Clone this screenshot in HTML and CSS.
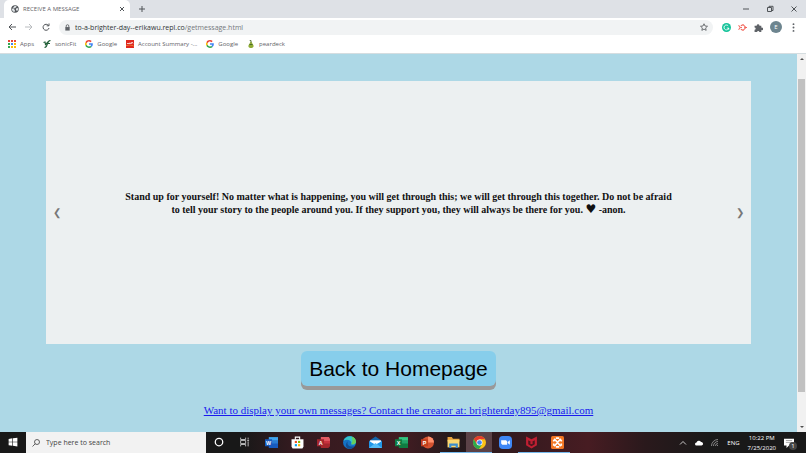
FILE: index.html
```html
<!DOCTYPE html>
<html lang="en">
<head>
<meta charset="UTF-8">
<meta name="viewport" content="width=device-width, initial-scale=1.0">
<title>RECEIVE A MESSAGE</title>
<link rel="stylesheet" href="styles.css">
</head>
<body>
<svg class="defs" aria-hidden="true">
    <symbol id="google" viewBox="0 0 48 48">
        <path fill="#ea4335" d="M24 9.5c3.5 0 6.700 1.200 9.200 3.600l6.900-6.900C35.900 2.400 30.500 0 24 0 14.600 0 6.500 5.400 2.600 13.200l8 6.200C12.400 13.700 17.700 9.500 24 9.500z"/>
        <path fill="#4285f4" d="M47 24.500c0-1.600-.2-3.100-.4-4.500H24v9h12.900c-.6 3-2.200 5.500-4.700 7.200l7.700 6C44.400 38 47 31.800 47 24.500z"/>
        <path fill="#fbbc05" d="M10.500 28.600a14.500 14.500 0 0 1 0-9.200l-8-6.200a24 24 0 0 0 0 21.600z"/>
        <path fill="#34a853" d="M24 48c6.500 0 11.900-2.100 15.900-5.800l-7.700-6c-2.200 1.500-4.900 2.300-8.200 2.300-6.300 0-11.600-4.200-13.500-9.900l-8 6.200C6.500 42.600 14.600 48 24 48z"/>
    </symbol>
</svg>

<header class="browser">
    <div class="tabs">
        <div class="tab">
            <svg class="favicon" viewBox="0 0 16 16"><circle cx="8" cy="8" r="7.500" fill="#53575b"/><path fill="#dfe3e6" d="M2 7l4 1 2 3-1 3-3-1-2-3zM7 2l4 0-1 3-3 1-1 2-2-2zM10 7l4-1 0 4-2 2-2-2z"/></svg>
            <span class="tab-title">RECEIVE A MESSAGE</span>
            <button class="icon-btn" aria-label="Close tab"><svg viewBox="0 0 8 8"><path d="M2 2l4 4M6 2l-4 4"/></svg></button>
        </div>
        <button class="icon-btn new-tab" aria-label="New tab"><svg viewBox="0 0 8 8"><path d="M4 1v6M1 4h6"/></svg></button>
        <div class="window-btns">
            <button class="icon-btn" aria-label="Minimize"><svg viewBox="0 0 8 8"><path d="M1 4h6"/></svg></button>
            <button class="icon-btn" aria-label="Restore"><svg viewBox="0 0 8 8"><path d="M1.500 2.500h4v4h-4zM3 2.500v-1.200h4v4.200h-1.500"/></svg></button>
            <button class="icon-btn" aria-label="Close"><svg viewBox="0 0 8 8"><path d="M1.500 1.500l5 5M6.500 1.500l-5 5"/></svg></button>
        </div>
    </div>
    <div class="toolbar">
        <button class="icon-btn" aria-label="Back"><svg viewBox="0 0 8 8"><path d="M8 4H1M4 1L1 4l3 3"/></svg></button>
        <button class="icon-btn forward" aria-label="Forward"><svg viewBox="0 0 8 8"><path d="M0 4h7M4 1l3 3-3 3"/></svg></button>
        <button class="icon-btn" aria-label="Reload"><svg viewBox="0 0 8 8"><path d="M6.500 2.500A3 3 0 1 0 7 5M7 .5v2.300H4.700"/></svg></button>
        <div class="address">
            <svg class="lock" viewBox="0 0 8 8"><path fill="#5f6368" d="M1.500 3.500h5v4h-5z"/><path fill="none" stroke="#5f6368" d="M2.500 4V2.300a1.500 1.500 0 0 1 3 0V4"/></svg>
            <span class="url">to-a-brighter-day--erikawu.repl.co<span class="path">/getmessage.html</span></span>
            <button class="icon-btn" aria-label="Bookmark this page"><svg viewBox="0 0 16 16"><path stroke-width="1.600" d="M8 1.500l2 4.500 5 .5-3.700 3.300 1 4.900L8 12.200l-4.300 2.500 1-4.900L1 6.500 6 6z"/></svg></button>
        </div>
        <div class="extensions">
            <svg viewBox="0 0 16 16"><circle cx="8" cy="8" r="8" fill="#15c39a"/><path fill="none" stroke="#fff" stroke-width="1.600" d="M11 5a4.300 4.300 0 1 0 1 4H8.500M12 9v3"/></svg>
            <svg viewBox="0 0 16 16"><path fill="none" stroke="#f2665c" stroke-width="1.800" d="M1 4l3 4-3 4M5 5l4-2 5 5-5 5-4-2M5 8h2M11 8h5"/></svg>
            <svg viewBox="0 0 16 16"><path fill="#5f6368" d="M1 5h4a2.300 2.300 0 1 1 4.500 0H13v3.500a2.300 2.300 0 1 1 0 4V16H9.500a2 2 0 1 0-4 0H1v-4a2 2 0 1 0 0-4z"/></svg>
            <span class="avatar">E</span>
            <svg viewBox="0 0 16 16"><g fill="#5f6368"><circle cx="8" cy="2" r="1.700"/><circle cx="8" cy="8" r="1.700"/><circle cx="8" cy="14" r="1.700"/></g></svg>
        </div>
    </div>
    <nav class="bookmarks">
        <a href="#"><svg viewBox="0 0 8 8"><g fill="#ea4335"><path d="M0 0h2v2H0zM3 0h2v2H3zM6 0h2v2H6z"/></g><path fill="#34a853" d="M0 3h2v2H0zM0 6h2v2H0z"/><path fill="#4285f4" d="M3 3h2v2H3z"/><path fill="#fbbc05" d="M6 3h2v2H6zM3 6h2v2H3zM6 6h2v2H6z"/></svg>Apps</a>
        <a href="#"><svg viewBox="0 0 16 16"><path fill="none" stroke="#24613a" stroke-width="2.400" d="M1 5l3-1 1 5 5-5M3 15c4 0 5-4 6-8s2-6 6-6M7 7h7"/></svg>sonicFit</a>
        <a href="#"><svg viewBox="0 0 8 8"><use href="#google"/></svg>Google</a>
        <a href="#"><svg viewBox="0 0 16 16"><path fill="#e0281e" d="M0 0h16v16H0z"/><path fill="none" stroke="#fff" stroke-width="1.500" d="M2 8l2-2 2 2 2-2M8 5l2 3 2-4 2 3"/><path fill="#f6b044" d="M0 11q8-3 16 1v1q-8-4-16-1z"/></svg>Account Summary -...</a>
        <a href="#"><svg viewBox="0 0 8 8"><use href="#google"/></svg>Google</a>
        <a href="#"><svg viewBox="0 0 16 16"><path fill="#8fac35" d="M8 4c3 0 2 3 4 5 3 4 0 7-4 7s-7-3-4-7c2-2 1-5 4-5z"/><path fill="none" stroke="#4c6b2b" stroke-width="2" d="M8 5V1l-3-1M5 9h6"/></svg>peardeck</a>
    </nav>
</header>

<div class="viewport">
    <main class="page">
        <section class="slideshow">
            <button class="arrow" aria-label="Previous message">&#10094;</button>
            <p class="message">Stand up for yourself! No matter what is happening, you will get through this; we will get through this together. Do not be afraid to tell your story to the people around you. If they support you, they will always be there for you. <span class="heart">&#9829;&#65038;</span> -anon.</p>
            <button class="arrow" aria-label="Next message">&#10095;</button>
        </section>
        <button class="home-btn">Back to Homepage</button>
        <a class="contact" href="mailto:brighterday895@gmail.com">Want to display your own messages? Contact the creator at: brighterday895@gmail.com</a>
    </main>
    <div class="scrollbar">
        <svg viewBox="0 0 8 8"><path d="M2 5l2-2 2 2z"/></svg>
        <div class="track"><div class="thumb"></div></div>
        <svg viewBox="0 0 8 8"><path d="M2 3l2 2 2-2z"/></svg>
    </div>
</div>

<footer class="taskbar">
    <button class="task" aria-label="Start"><svg viewBox="0 0 16 16"><path fill="#fff" d="M1 3l6-1v5.500H1zM8 2l7-1v6.500H8zM1 8.500h6V14l-6-1zM8 8.500h7V15l-7-1z"/></svg></button>
    <label class="search">
        <svg viewBox="0 0 16 16"><circle cx="10" cy="6" r="5"/><path d="M6.500 9.500L1 15"/></svg>
        <input type="text" placeholder="Type here to search" aria-label="Type here to search">
    </label>
    <button class="task" aria-label="Cortana"><svg viewBox="0 0 16 16"><circle cx="8" cy="8" r="6" fill="none" stroke="#fff" stroke-width="2"/></svg></button>
    <button class="task" aria-label="Task view"><svg viewBox="0 0 16 16"><path fill="none" stroke="#ccc" stroke-width="1.400" d="M1 1v3h8V1M1 15v-3h8v3M1 5.500h8v5H1zM13 1v3M13 7v8M11.500 5.500h3"/></svg></button>
    <button class="task" aria-label="Word"><svg class="app" viewBox="0 0 24 24"><path fill="#41a5ee" d="M7 2h17v7H7z"/><path fill="#2b7cd3" d="M7 8h17v7H7z"/><path fill="#185abd" d="M7 14h17v8H7zM0 6h13v13H0z"/><text x="2" y="16">W</text></svg></button>
    <button class="task" aria-label="Store"><svg class="app" viewBox="0 0 24 24"><path fill="none" stroke="#fff" stroke-width="2" d="M8 7V2h8v5"/><path fill="#fff" d="M1 6h22v14l-2 3H3l-2-3z"/><path fill="#f25022" d="M7 9h4v4H7z"/><path fill="#7fba00" d="M13 9h4v4h-4z"/><path fill="#00a4ef" d="M7 15h4v4H7z"/><path fill="#ffb900" d="M13 15h4v4h-4z"/></svg></button>
    <button class="task" aria-label="Access"><svg class="app" viewBox="0 0 24 24"><path fill="#e35b62" d="M7 2h15l2 3v5H7z"/><path fill="#c8323e" d="M7 9h17v6H7z"/><path fill="#a4262c" d="M7 14h17v5l-3 3H7zM0 6h13v13H0z"/><text x="3" y="16">A</text></svg></button>
    <button class="task" aria-label="Edge"><svg class="app" viewBox="0 0 24 24"><circle cx="12" cy="12" r="12" fill="#1572c6"/><path fill="#36c5c9" d="M1 9C5-3 22-2 24 10c0 5-4 7-9 5 3-5-6-11-14-6z"/><path fill="#67cf5b" d="M16 1c6 2 8 6 8 10-1 4-5 5-9 4 4-5 2-10 1-14z"/><path fill="#124f93" d="M9 10c-3 6 3 11 12 9-3 4-7 5-11 4-6-2-6-10-1-13z"/></svg></button>
    <button class="task" aria-label="Mail"><svg class="app" viewBox="0 0 24 24"><path fill="#1565a9" d="M0 9l12-8 12 8v3H0z"/><path fill="#fff" d="M2 8h20v8H2z"/><path fill="#2196e8" d="M0 9l12 7 12-7v13H0z"/><path fill="#55baf4" d="M0 22l12-9 12 9z"/></svg></button>
    <button class="task" aria-label="Excel"><svg class="app" viewBox="0 0 24 24"><path fill="#33c481" d="M7 2h17v7H7z"/><path fill="#21a366" d="M7 8h17v7H7z"/><path fill="#107c41" d="M7 14h17v8H7zM0 6h13v13H0z"/><text x="3" y="16">X</text></svg></button>
    <button class="task" aria-label="PowerPoint"><svg class="app" viewBox="0 0 24 24"><circle cx="13" cy="12" r="11" fill="#d35230"/><path fill="#ff8f6b" d="M13 1a11 11 0 0 1 11 11H13z"/><path fill="#c43e1c" d="M0 6h13v13H0z"/><text x="3" y="16">P</text></svg></button>
    <button class="task open" aria-label="File Explorer"><svg class="app" viewBox="0 0 24 24"><path fill="#e8a33d" d="M1 2h8l2 3h12v5H1z"/><path fill="#fbd971" d="M1 7h22v14H1z"/><path fill="#3c8dcc" d="M4 22v-8h16v8h-4v-4H8v4z"/></svg></button>
    <button class="task open active" aria-label="Chrome"><svg class="app" viewBox="0 0 24 24"><circle cx="12" cy="12" r="12" fill="#fbc116"/><path fill="#e33b2e" d="M1.600 6A12 12 0 0 1 22.400 6H12l-5 9z"/><path fill="#2da94f" d="M1.600 6A12 12 0 0 0 11 24l6-9-5 2-5-2z"/><circle cx="12" cy="12" r="5.500" fill="#fff"/><circle cx="12" cy="12" r="4.300" fill="#4285f4"/></svg></button>
    <button class="task" aria-label="Zoom"><svg class="app" viewBox="0 0 24 24"><rect width="24" height="24" rx="7" fill="#3f87f5"/><path fill="#fff" d="M4 8h9l2 2v6H6l-2-2zM16 11l4-3v8l-4-3z"/></svg></button>
    <button class="task open" aria-label="McAfee"><svg class="app" viewBox="0 0 24 24"><path fill="#c01f32" d="M2 1l10 5 10-5v16l-10 6-10-6z"/><path fill="#4a171d" d="M6 8l6 3 6-3v7l-6 4-6-4z"/><path fill="#c01f32" d="M10 10h4v5h-4z"/></svg></button>
    <button class="task open" aria-label="XAMPP"><svg class="app" viewBox="0 0 24 24"><rect width="24" height="24" rx="3" fill="#f37623"/><path fill="none" stroke="#fff" stroke-width="3" d="M6 5l12 14M18 5L6 19M5 7v3M19 7v3M5 14v4M19 14v4M9 4h6M9 20h6"/></svg></button>
    <div class="tray">
        <svg viewBox="0 0 16 16"><path fill="none" stroke="#fff" stroke-width="1.500" d="M2 11l6-6 6 6"/></svg>
        <svg viewBox="0 0 16 16"><path fill="#fff" d="M3 13a3 3 0 0 1 0-6 5 5 0 0 1 9-1 3.500 3.500 0 0 1 1 7z"/></svg>
        <svg viewBox="0 0 16 16"><path fill="none" stroke="#aaa" stroke-width="1.500" d="M1 14A13 13 0 0 1 14 1M5 14a9 9 0 0 1 9-9M9 14a5 5 0 0 1 5-5M12 14l2-2"/></svg>
        <span>ENG</span>
        <div class="clock"><span>10:22 PM</span><span>7/25/2020</span></div>
        <div class="notify">
            <svg viewBox="0 0 16 16"><path fill="#fff" d="M0 1h16v11H8l-4 4v-4H0z"/><path stroke="#777" d="M3 4h10M3 7h10"/></svg>
            <span class="badge">1</span>
        </div>
    </div>
</footer>
</body>
</html>
```

FILE: styles.css
```css
* {
    box-sizing: border-box;
}
body {
    margin: 0;
    height: 100vh;
    display: flex;
    flex-direction: column;
    overflow: hidden;
    font-family: "Open Sans", "Noto Sans", sans-serif;
    font-size: 6px;
    color: #5f6368;
}
button {
    border: none;
    background: none;
    padding: 0;
    font-family: inherit;
    cursor: pointer;
}
svg {
    display: block;
    flex: none;
    width: 8px;
    height: 8px;
}
.defs {
    position: absolute;
    width: 0;
    height: 0;
}
.icon-btn svg {
    fill: none;
    stroke: #505458;
}

/* browser */
.browser {
    background-color: #fff;
    border-bottom: 1px solid #d5dde0;
}
.tabs {
    display: flex;
    align-items: center;
    height: 18px;
    padding-left: 4px;
    background-color: #dee1e6;
}
.tab {
    display: flex;
    align-items: center;
    gap: 4px;
    width: 126px;
    height: 18px;
    padding: 0 4px 0 7px;
    border-radius: 5px 5px 0 0;
    background-color: #fff;
}
.tab-title {
    flex: 1;
    white-space: nowrap;
}
.new-tab {
    margin-left: 8px;
}
.window-btns {
    display: flex;
    gap: 16px;
    margin-left: auto;
    padding-right: 8px;
}
.toolbar {
    display: flex;
    align-items: center;
    gap: 9px;
    height: 18px;
    padding: 0 8px;
}
.forward svg {
    stroke: #b9bcbf;
}
.address {
    flex: 1;
    display: flex;
    align-items: center;
    gap: 4px;
    height: 15px;
    padding: 0 5px;
    border-radius: 8px;
    background-color: #f1f3f4;
}
.lock {
    width: 7px;
    height: 7px;
}
.url {
    flex: 1;
    font-size: 7px;
    color: #303336;
}
.path {
    color: #74787c;
}
.extensions {
    display: flex;
    align-items: center;
    gap: 7px;
}
.extensions svg {
    width: 9px;
    height: 9px;
}
.avatar {
    width: 12px;
    height: 12px;
    border-radius: 50%;
    background-color: #6d858f;
    color: #fff;
    line-height: 12px;
    text-align: center;
}
.bookmarks {
    display: flex;
    align-items: center;
    gap: 9px;
    height: 17px;
    padding: 0 8px 2px;
}
.bookmarks a {
    display: flex;
    align-items: center;
    gap: 4px;
    color: #5f6368;
    text-decoration: none;
}

/* page */
.viewport {
    flex: 1;
    display: flex;
    min-height: 0;
}
.page {
    flex: 1;
    display: flex;
    flex-direction: column;
    align-items: center;
    padding: 27px 46px 0;
    background-color: #add8e6;
    font-family: "Liberation Serif", "Times New Roman", "DejaVu Sans", serif;
}
.slideshow {
    display: flex;
    align-items: center;
    width: 100%;
    height: 75%;
    padding: 0 7px;
    background-color: #ecf0f1;
}
.arrow {
    width: 8px;
    font-family: "DejaVu Sans", sans-serif;
    font-size: 10px;
    color: #777;
}
.message {
    flex: 1;
    margin: 0;
    padding: 0 64px 20px;
    font-size: 10px;
    font-weight: bold;
    line-height: 13px;
    text-align: center;
    color: #111;
}
.heart {
    font-family: "DejaVu Sans", sans-serif;
    font-size: 12px;
    line-height: 10px;
}
.home-btn {
    margin-top: 7px;
    padding: 0 8px;
    border-radius: 6px;
    background-color: #87ceeb;
    box-shadow: 0 4px #999;
    font-family: "Liberation Sans", Arial, sans-serif;
    font-size: 21px;
    line-height: 35px;
    color: #000;
}
.contact {
    margin-top: 18px;
    font-size: 11px;
    line-height: 13px;
    color: #1a1aee;
}
.scrollbar {
    display: flex;
    flex-direction: column;
    align-items: center;
    width: 9px;
    padding: 1px 0;
    background-color: #f1f1f1;
}
.scrollbar svg {
    fill: #505050;
}
.track {
    flex: 1;
    width: 7px;
    padding-top: 16px;
}
.thumb {
    height: 91%;
    background-color: #c1c1c1;
}

/* taskbar */
.taskbar {
    display: flex;
    align-items: center;
    height: 21px;
    background: linear-gradient(90deg, #181818 30%, #321a1f 36%, #421c22 50%, #241a1c 56%, #351a1f 64%, #471c22 73%, #2a191c 80%, #191919 88%);
    color: #fff;
}
.task {
    display: flex;
    align-items: center;
    justify-content: center;
    width: 26px;
    height: 21px;
    border-bottom: 1px solid transparent;
}
.task svg {
    width: 10px;
    height: 10px;
}
.task .app {
    width: 13px;
    height: 13px;
}
.app text {
    fill: #fff;
    font-family: "Liberation Sans", sans-serif;
    font-size: 10px;
    font-weight: bold;
}
.open {
    border-bottom-color: #76b9ed;
}
.active {
    background-color: #5b4247;
}
.search {
    display: flex;
    align-items: center;
    gap: 6px;
    width: 180px;
    height: 21px;
    padding-left: 6px;
    background-color: #f2f2f2;
}
.search svg {
    fill: none;
    stroke: #333;
    stroke-width: 1.5;
}
.search input {
    flex: 1;
    min-width: 0;
    padding: 0;
    border: none;
    outline: none;
    background: none;
    font-family: inherit;
    font-size: 7px;
}
.search input::placeholder {
    color: #444;
}
.tray {
    display: flex;
    align-items: center;
    gap: 8px;
    margin-left: auto;
    padding-right: 12px;
}
.clock {
    display: flex;
    flex-direction: column;
    align-items: center;
    line-height: 10px;
}
.notify {
    position: relative;
}
.notify svg {
    width: 10px;
    height: 10px;
}
.badge {
    position: absolute;
    left: 5px;
    top: 4px;
    width: 8px;
    height: 8px;
    border-radius: 50%;
    background-color: #444;
    line-height: 8px;
    text-align: center;
}
```
